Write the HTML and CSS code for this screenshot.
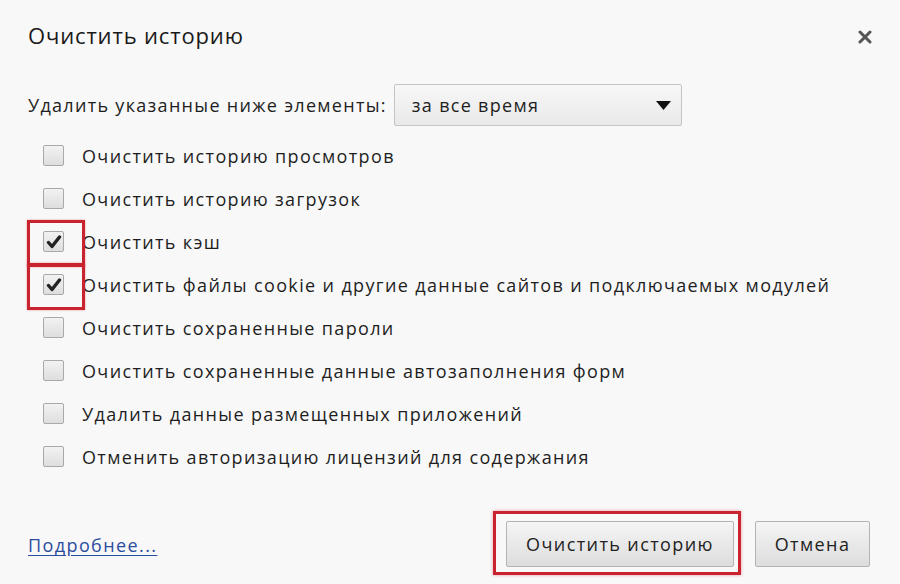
FILE: index.html
```html
<!DOCTYPE html>
<html lang="ru">
<head>
<meta charset="utf-8">
<link rel="stylesheet" href="styles.css">
</head>
<body>
<div class="dialog">
  <div class="header">
    <h1 class="title">Очистить историю</h1>
    <svg class="close" width="14" height="14" viewBox="0 0 14 14"><path d="M2 2 L12 12 M12 2 L2 12" stroke="#555" stroke-width="3" stroke-linecap="round"/></svg>
  </div>
  <div class="range">
    <span class="range-label">Удалить указанные ниже элементы:</span>
    <div class="select">
      <span>за все время</span>
      <svg class="arrow" width="15" height="9" viewBox="0 0 15 9"><path d="M0 0 H15 L7.5 9 Z" fill="#111"/></svg>
    </div>
  </div>
  <ul class="list">
    <li class="item"><span class="cb"></span><span class="txt">Очистить историю просмотров</span></li>
    <li class="item"><span class="cb"></span><span class="txt">Очистить историю загрузок</span></li>
    <li class="item"><span class="cb checked marked"><svg width="16" height="14" viewBox="0 0 16 14"><path d="M2.5 7.5 L6 11.5 L13.5 2" fill="none" stroke="#222" stroke-width="3.4" stroke-linejoin="round" stroke-linecap="round"/></svg></span><span class="txt">Очистить кэш</span></li>
    <li class="item"><span class="cb checked marked"><svg width="16" height="14" viewBox="0 0 16 14"><path d="M2.5 7.5 L6 11.5 L13.5 2" fill="none" stroke="#222" stroke-width="3.4" stroke-linejoin="round" stroke-linecap="round"/></svg></span><span class="txt">Очистить файлы cookie и другие данные сайтов и подключаемых модулей</span></li>
    <li class="item"><span class="cb"></span><span class="txt">Очистить сохраненные пароли</span></li>
    <li class="item"><span class="cb"></span><span class="txt">Очистить сохраненные данные автозаполнения форм</span></li>
    <li class="item"><span class="cb"></span><span class="txt">Удалить данные размещенных приложений</span></li>
    <li class="item"><span class="cb"></span><span class="txt">Отменить авторизацию лицензий для содержания</span></li>
  </ul>
  <div class="footer">
    <a class="more" href="#">Подробнее...</a>
    <div class="actions">
      <div class="highlight"><button class="btn btn-main">Очистить историю</button></div>
      <button class="btn btn-cancel">Отмена</button>
    </div>
  </div>
</div>
</body>
</html>
```
FILE: styles.css
```css
* { box-sizing: border-box; }
html, body {
  margin: 0;
  padding: 0;
  background: #f8f8f8;
}
body {
  width: 900px;
  height: 584px;
  overflow: hidden;
  font-family: "Open Sans", "Noto Sans", sans-serif;
  color: #1e1e1e;
}
.dialog {
  padding: 0 30px 0 28px;
}
.header {
  height: 70px;
  display: flex;
  align-items: center;
  justify-content: space-between;
}
.title {
  margin: 0;
  font-weight: 400;
  font-size: 22px;
  color: #1a1a1a;
  letter-spacing: 0.85px;
}
.close {
  margin-right: -2px;
  margin-top: 4px;
}
.range {
  margin-top: 14px;
  display: flex;
  align-items: center;
  gap: 7px;
}
.range-label {
  font-size: 18px;
  letter-spacing: 1.3px;
}
.select {
  width: 288px;
  height: 42px;
  border: 1px solid #c4c4c4;
  border-radius: 2px;
  background: linear-gradient(#f7f7f7, #e9e9e9);
  display: flex;
  align-items: center;
  justify-content: space-between;
  padding: 0 10px 0 17px;
  font-size: 18px;
  letter-spacing: 1.3px;
}
.list {
  list-style: none;
  margin: 8px 0 0;
  padding: 0;
}
.item {
  height: 43px;
  display: flex;
  align-items: center;
  padding-left: 15px;
}
.cb {
  position: relative;
  width: 21px;
  height: 21px;
  border: 1px solid #a9a9a9;
  border-radius: 2px;
  background: linear-gradient(#f2f2f2, #dedede);
  display: flex;
  align-items: center;
  justify-content: center;
  flex: none;
}
.cb.marked::after {
  content: "";
  position: absolute;
  left: -17px;
  top: -12px;
  width: 52px;
  height: 41px;
  border: 3px solid #c8232f;
  box-shadow: 0 0 2px rgba(200, 35, 47, 0.45);
}
.txt {
  margin-left: 18px;
  font-size: 18px;
  letter-spacing: 1.35px;
  white-space: nowrap;
}
.footer {
  margin-top: 33px;
  display: flex;
  align-items: center;
  justify-content: space-between;
}
.more {
  font-size: 18px;
  letter-spacing: 1.4px;
  color: #2b4c9e;
  text-decoration: underline;
  text-underline-offset: 3px;
  margin-top: 4px;
}
.actions {
  display: flex;
  align-items: center;
  gap: 14px;
}
.highlight {
  border: 3px solid #c8232f;
  box-shadow: 0 0 3px rgba(200, 35, 47, 0.45);
  padding: 7px 4px 5px 10px;
}
.btn {
  height: 46px;
  border: 1px solid #b3b3b3;
  border-radius: 2px;
  background: linear-gradient(#f5f5f5, #dddddd);
  font-family: inherit;
  font-size: 18px;
  letter-spacing: 1.4px;
  color: #222;
  padding: 0;
}
.btn-main {
  width: 228px;
}
.btn-cancel {
  width: 115px;
  margin-top: 2px;
}
```
